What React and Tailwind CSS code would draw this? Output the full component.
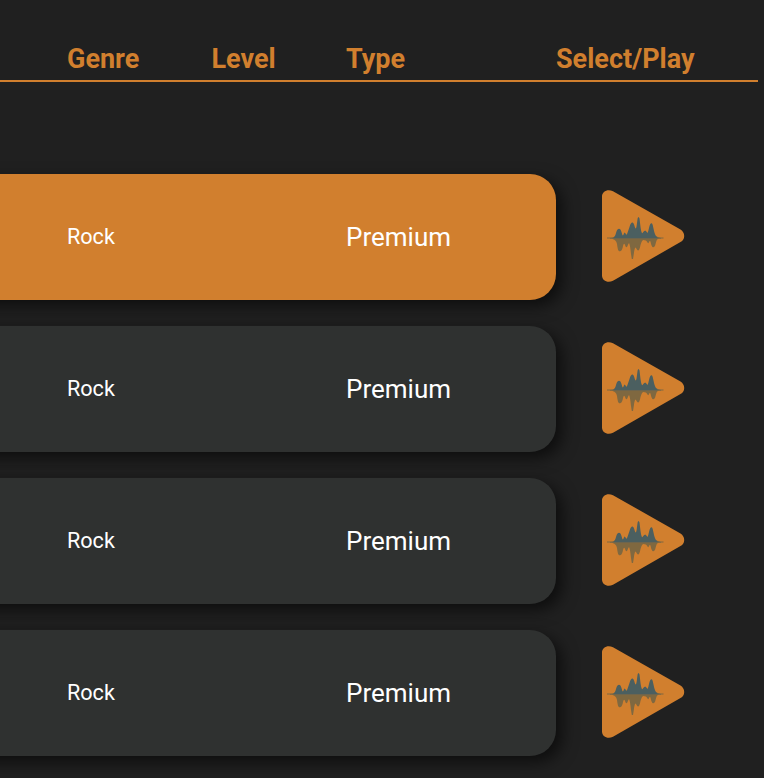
const tracks = [
  { id: 1, genre: 'Rock', level: '', type: 'Premium', selected: true },
  { id: 2, genre: 'Rock', level: '', type: 'Premium', selected: false },
  { id: 3, genre: 'Rock', level: '', type: 'Premium', selected: false },
  { id: 4, genre: 'Rock', level: '', type: 'Premium', selected: false },
];

function PlayIcon() {
  return (
    <svg width="83" height="92" viewBox="0 0 83 92" aria-hidden="true">
      <path
        d="M0 6.500C0 1.500 5.500-1.500 11 1.200L78.500 39.500Q82.200 42 82.200 46T78.500 52L11 90.800C5.500 93.500 0 90.500 0 85.500Z"
        fill="#d17f2e"
      />
      {/* lower half of the wave */}
      <path
        d="M10 48.300H57L55.500 49.300Q54.500 50 53.800 53C53 56.500 52.200 57.300 51.300 57.300S49.300 56 48.500 51.500Q47.500 50 46.800 52.500Q46 54 45.200 52Q44.500 50 41 50Q39.500 51 38.500 55C37.800 59 37 60.500 36 60.500S34.500 58 33.500 57.500Q32.500 58 31.800 64L31 69H29.800L29 64Q28 54.500 27 53Q26.200 54 25.500 56Q24.300 59 23 55Q22 52 21 56C20.300 60 19 61.300 17.700 61.300S15.800 60 15 54Q14 49.800 11 49.300Z"
        fill="#7f6840"
      />
      <path
        d="M8 48Q11 48 12.500 46.500Q13.500 45.500 14.300 42C15 39.500 16 38.700 17 38.700S19 39.500 19.800 43Q20.500 46.500 21.300 45Q22.600 40.500 23.800 44Q24.600 46 25.800 42L27.500 37C28.500 33.500 29.400 32.500 30.300 32.500S32 33.500 33 37.500Q34 40 34.600 36L35.600 28.500Q36.500 25.500 37.500 28.500L38.500 37Q39.500 44 40.500 43Q42 40.500 43.200 40.500Q44.800 41.500 45.500 43Q46.200 42 47 38C47.800 34.500 48.600 33.200 49.400 33.200S50.700 34 51.400 38Q52.500 44 54 46Q55.500 47.500 59 48V48.500H8Z"
        fill="#4b5f60"
      />
      <path d="M5 48H12M55 48H61.500" stroke="#7f6840" strokeWidth="1" />
    </svg>
  );
}

function TrackRow({ track }) {
  return (
    <div className="flex items-center">
      {/* the card bleeds past the left edge of the panel */}
      <div
        className={`-ml-10 flex h-[126px] w-[596px] items-center rounded-r-[26px] pl-[107px] text-white shadow-[6px_6px_16px_rgba(0,0,0,0.6)] ${
          track.selected ? 'bg-[#d17f2e]' : 'bg-[#2f3130]'
        }`}
      >
        <span className="w-[145px] text-[21.6px] leading-8">{track.genre}</span>
        <span className="w-[134px]">{track.level}</span>
        <span className="text-[26px]">{track.type}</span>
      </div>
      <button className="ml-[46px] -mt-0.5" aria-label="Play">
        <PlayIcon />
      </button>
    </div>
  );
}

export default function App() {
  return (
    <div className="h-[778px] w-[764px] overflow-hidden bg-[#202020] font-['Roboto',sans-serif]">
      <header className="mr-1.5 flex h-[82px] items-end border-b-2 border-[#d17f2e] pb-[5px] pl-[67px] text-[27px] leading-8 font-bold text-[#d17f2e]">
        <span className="w-[144.500px]">Genre</span>
        <span className="w-[134.500px]">Level</span>
        <span className="w-[210px]">Type</span>
        <span>Select/Play</span>
      </header>
      <main className="mt-[92px] flex flex-col gap-[26px]">
        {tracks.map((track) => (
          <TrackRow key={track.id} track={track} />
        ))}
      </main>
    </div>
  );
}
